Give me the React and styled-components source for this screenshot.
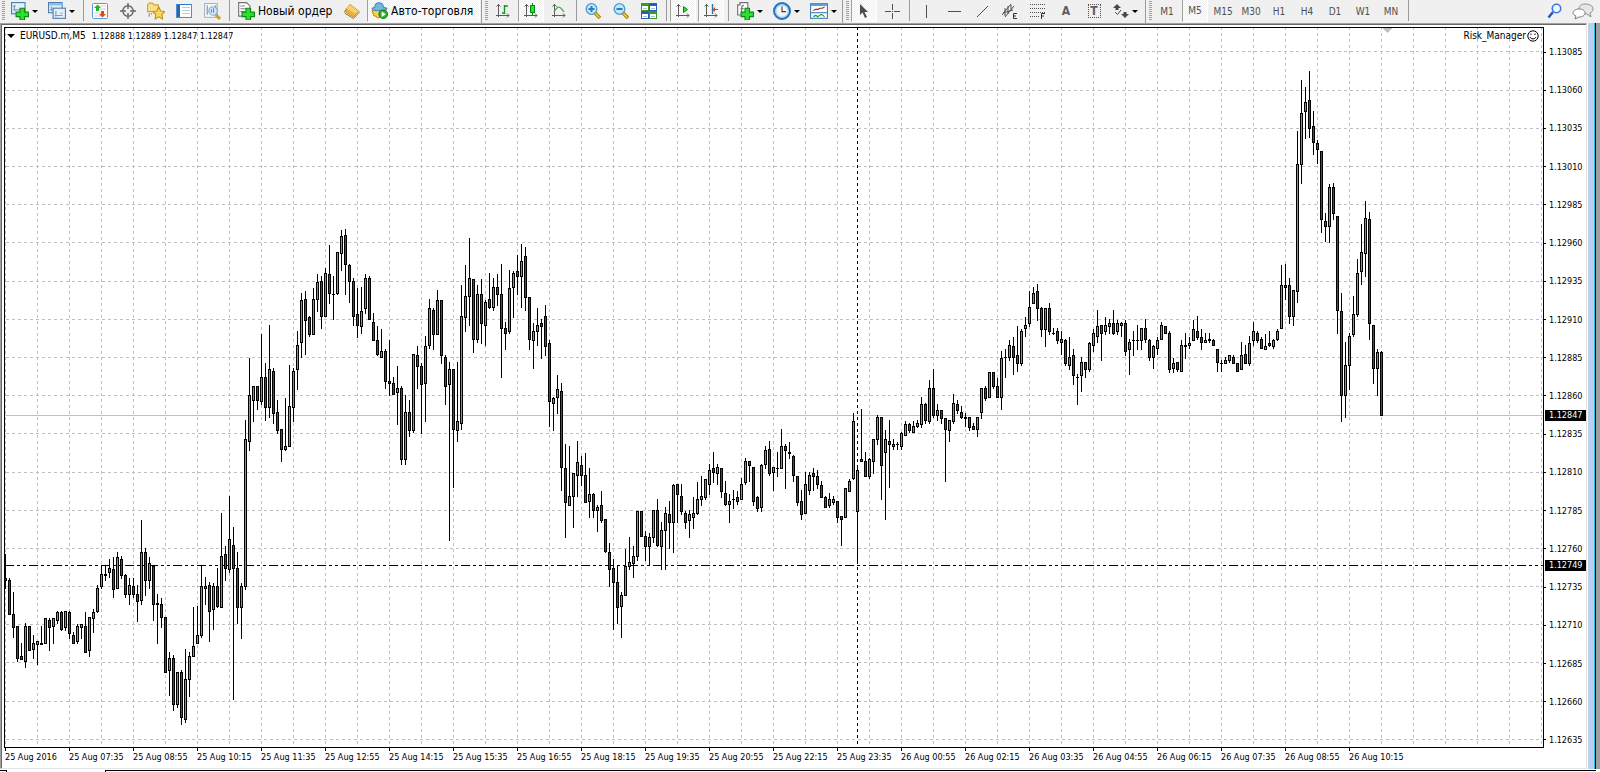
import React from 'react';
import styled, { createGlobalStyle, css } from 'styled-components';

const GlobalStyle = createGlobalStyle`
  * { box-sizing: border-box; }
  html, body { margin: 0; background: #ffffff; }
  body { overflow: hidden; font-family: 'DejaVu Sans Condensed', 'DejaVu Sans', sans-serif; }
  button { font: inherit; color: inherit; }
`;

/* ---------- chart data ---------- */

// high, open, close, low as chart rows, one candle every 4 columns
const CANDLES = `
554,578,581,589 578,580,615,615 592,614,628,638 626,626,659,662 643,656,660,660 623,662,626,668
626,626,651,651 635,650,643,659 641,645,641,665 626,645,643,645 618,644,618,644 618,620,628,651
618,627,618,644 611,621,612,624 611,612,630,631 611,628,611,631 611,612,634,639 632,635,644,644
624,642,626,644 624,628,624,639 612,626,653,653 617,651,617,657 609,619,612,633 585,612,588,613
565,587,574,589 565,576,574,581 559,573,568,578 557,569,590,598 552,589,557,589 556,559,576,579
574,575,595,598 578,595,585,605 578,586,595,598 585,594,602,622 520,601,552,605 548,552,581,596
557,581,563,589 565,566,605,621 594,605,603,644 598,604,618,628 617,617,673,673 652,671,658,696
655,658,705,711 672,705,672,708 670,672,718,725 649,720,679,723 652,680,656,697 607,657,646,657
606,644,635,644 565,636,586,638 577,589,586,605 582,585,612,642 583,610,586,630 568,586,607,608
513,608,556,608 546,554,569,581 496,570,539,573 527,545,569,700 552,568,608,624 583,608,586,639
420,587,439,590 358,442,395,451 386,401,386,422 386,386,401,410 334,402,377,405 363,377,408,421
325,408,369,418 368,371,414,424 400,412,431,434 429,429,450,462 398,450,446,451 365,447,406,447
368,408,371,422 331,370,345,390 293,343,300,358 291,299,321,355 316,317,335,337 288,335,299,335
274,300,282,312 276,281,317,329 268,317,273,317 245,274,294,304 276,295,294,320 252,294,252,295
230,254,236,271 229,235,265,295 264,265,282,303 278,281,317,326 288,314,326,338 287,327,311,334
274,309,278,314 276,278,320,320 313,322,341,341 326,340,355,356 329,358,351,358 349,351,382,389
340,381,384,396 377,383,395,395 366,393,388,425 386,388,460,465 395,460,412,465 400,412,431,437
354,431,354,433 346,355,367,389 363,366,385,434 336,384,346,422 299,346,308,349 308,310,335,350
290,335,300,335 300,300,356,364 355,357,387,405 362,385,369,541 369,369,430,488 362,431,421,442
285,424,316,430 265,318,296,332 238,297,278,326 279,279,340,353 285,340,294,343 279,294,324,344
300,326,302,346 273,299,308,309 278,308,287,311 274,287,295,306 264,294,329,378 322,328,334,350
270,332,288,334 271,288,273,318 255,271,277,295 244,277,261,308 247,256,298,311 297,297,340,350
323,341,331,369 308,332,325,346 319,323,327,359 305,316,347,356 340,343,402,427 397,404,398,431
375,398,389,414 383,391,468,491 444,468,503,538 446,506,496,506 473,497,473,528 441,476,462,497
456,465,476,486 453,475,503,503 468,502,494,518 493,494,511,518 505,511,507,532 491,505,521,523
519,519,552,553 543,552,570,587 559,568,583,630 565,582,608,624 592,607,595,638 549,596,566,596
537,567,562,570 546,564,556,578 511,557,511,561 511,511,537,537 531,536,547,561 533,547,537,566
510,538,510,543 499,510,546,547 522,547,530,570 507,531,513,570 501,514,523,549 484,523,485,553
484,484,495,523 484,496,512,515 511,513,523,529 510,521,514,538 497,518,513,529 482,514,499,515
476,500,496,506 479,498,479,500 464,485,470,495 452,468,473,483 464,474,467,485 468,468,492,498
481,493,505,506 494,505,501,523 490,500,499,509 491,497,502,505 478,500,484,500 458,483,461,485
461,461,466,482 467,467,502,506 496,497,509,512 464,508,465,512 446,465,450,469 441,449,474,476
467,473,467,491 452,469,468,477 429,469,446,469 444,446,451,489 442,454,452,459 455,456,476,482
476,476,503,506 490,501,515,520 472,514,484,514 472,491,475,495 468,473,477,491 470,476,485,489
481,485,498,498 496,497,508,508 493,506,499,508 496,503,499,505 501,501,518,523 516,516,520,546
488,518,488,518 479,492,481,492 413,479,421,480 466,512,470,564 409,459,462,462 452,461,477,477
458,477,459,479 439,462,439,474 415,440,417,445 417,417,466,500 430,453,439,520 420,441,445,488
439,447,444,450 442,445,444,450 432,447,433,450 421,436,424,436 423,424,431,433 421,433,426,433
420,427,423,428 397,425,404,428 403,404,421,424 380,422,388,424 369,388,416,418 404,416,410,421
410,410,419,424 418,418,430,482 420,431,420,442 394,422,403,424 400,404,411,414 406,412,418,419
413,419,417,427 417,417,428,431 423,426,430,430 417,430,417,437 388,413,388,419 386,388,399,401
372,398,372,398 372,372,387,389 378,386,398,398 351,398,358,410 349,358,357,378 340,358,345,361
337,346,358,375 326,355,364,372 329,364,331,366 317,329,325,337 291,324,307,327 287,304,293,304
284,291,309,321 307,308,330,337 308,330,308,347 303,308,332,335 328,334,333,335 328,331,341,344
331,343,339,355 339,340,364,366 337,366,357,370 349,355,376,385 374,378,377,405 357,376,362,392
362,362,370,378 342,370,343,372 329,346,333,352 310,337,326,343 325,325,334,361 317,332,325,335
319,327,323,334 310,323,334,335 320,332,323,335 322,326,323,337 320,323,352,356 339,350,342,375
331,341,340,356 325,341,340,350 328,341,328,350 319,328,340,343 339,340,358,361 345,358,346,369
337,349,340,355 322,340,325,340 326,326,334,334 331,333,370,373 358,369,363,373 362,362,370,372
340,372,345,372 333,347,345,359 337,346,343,349 320,341,329,341 316,331,338,340 329,337,343,350
333,343,340,343 333,341,339,343 339,340,346,346 349,349,363,372 360,364,363,372 357,364,360,364
355,361,355,363 355,357,364,364 363,363,372,372 342,370,355,370 345,354,364,364 336,364,343,366
322,341,331,346 331,333,341,343 337,339,349,349 334,350,346,350 331,343,346,347 339,347,340,349
329,340,331,341 265,329,285,329 264,285,288,300 278,285,317,324 290,317,290,326 131,292,164,303
80,165,113,184 87,112,102,139 71,100,129,138 111,126,143,155 140,143,150,164 151,151,220,233
213,221,227,242 184,227,187,243 183,187,214,220 216,216,311,334 293,311,396,422 342,396,365,418
333,366,336,390 296,335,314,337 259,315,273,317 224,272,252,285 201,254,218,277 212,219,324,340
325,325,369,384 349,369,352,396 351,352,416,416
`.trim().split(/\s+/).map((row) => row.split(',').map(Number));

const GRID_ROWS = [51, 90, 128, 166, 204, 242, 281, 319, 357, 395, 433, 472, 510, 548, 586, 624, 662, 701, 739];
const GRID_COLS = Array.from({ length: 70 }, (_, i) => 5 + i * 32);

const PRICES = GRID_ROWS.map((_, i) => ((113085 - i * 25) / 100000).toFixed(5));

const TIMES = [
  '25 Aug 2016', '25 Aug 07:35', '25 Aug 08:55', '25 Aug 10:15', '25 Aug 11:35', '25 Aug 12:55',
  '25 Aug 14:15', '25 Aug 15:35', '25 Aug 16:55', '25 Aug 18:15', '25 Aug 19:35', '25 Aug 20:55',
  '25 Aug 22:15', '25 Aug 23:35', '26 Aug 00:55', '26 Aug 02:15', '26 Aug 03:35', '26 Aug 04:55',
  '26 Aug 06:15', '26 Aug 07:35', '26 Aug 08:55', '26 Aug 10:15',
];

const PERIODS = ['M1', 'M5', 'M15', 'M30', 'H1', 'H4', 'D1', 'W1', 'MN'];

/* ---------- toolbar parts ---------- */

const Toolbar = styled.header`
  display: flex;
  height: 23px;
  padding-right: 3px;
  background: #f0f0f0;
  white-space: nowrap;
  overflow: hidden;
`;

const Handle = styled.span`
  flex: none;
  width: ${(p) => (p.$first ? 6 : 8)}px;
  padding: 1px 0 2px ${(p) => (p.$first ? 2 : 3)}px;
  border-left: ${(p) => (p.$first ? 0 : 1)}px solid #9a9a9a;
  &::before {
    content: '';
    display: block;
    width: 3px;
    height: 19px;
    background: repeating-linear-gradient(#a0a0a0 0 1px, #f0f0f0 1px 2px);
  }
`;

const Divider = styled.span`
  flex: none;
  width: 6px;
  height: 21px;
  border-right: 2px solid #f0f0f0;
  border-left: 3px solid #f0f0f0;
  background: #9a9a9a;
`;

const ToolButton = styled.button`
  flex: none;
  display: flex;
  align-items: center;
  justify-content: center;
  width: 28px;
  height: 22px;
  padding: 0;
  border: 0;
  background: none;
  ${(p) => p.$drop && css`
    width: 37px;
    padding-left: 5px;
    gap: 3px;
    justify-content: flex-start;
    &::after {
      content: '';
      border: 3px solid transparent;
      border-top-color: #000000;
      border-bottom: 0;
    }
  `}
  ${(p) => p.$pressed && css`
    width: 26px;
    margin: 0 1px;
    border-left: 1px solid #a0a0a0;
    border-right: 1px solid #ffffff;
    border-bottom: 1px solid #ffffff;
    background: repeating-conic-gradient(#f0f0f0 0 25%, #ffffff 0 50%) 0 0 / 2px 2px;
  `}
`;

const TextButton = styled(ToolButton)`
  justify-content: flex-start;
  gap: 3px;
  font-size: 12px;
  width: ${(p) => p.$width}px;
  padding-left: ${(p) => (p.$pressed ? 3 : 5)}px;
`;

const PeriodButton = styled(ToolButton)`
  font-size: 10px;
  color: #505050;
`;

const Spacer = styled.span`
  flex: 1;
`;

const Icon = ({ children, size = 16, ...rest }) => (
  <svg width={size} height={size} viewBox="0 0 16 16" fill="none" aria-hidden="true" {...rest}>
    {children}
  </svg>
);

const plus = <path d="M8 5.500h4v3.500h3.500v4H12v3H8v-3H4.500V9H8z" fill="#2ee02e" stroke="#0a8a14" />;
const axes = <path d="M3.500 1v13M1 12.500h13M1.500 3.500l2-2 2 2M12 10.500l2 2-2 2" stroke="#5c5c5c" />;
const lens = (
  <>
    <path d="M10 10l5 5" stroke="#a87808" strokeWidth="3.500" />
    <path d="M10 10l4.500 4.500" stroke="#f4d050" strokeWidth="1.500" />
    <circle cx="6.500" cy="6" r="5.300" fill="#c4e8fb" stroke="#4b9ad0" strokeWidth="1.300" />
  </>
);

const NewChartIcon = () => (
  <Icon size={18}>
    <rect x=".5" y=".5" width="12" height="10" fill="#e4f1fb" stroke="#4b80b0" />
    <path d="M3 3v5M2 7h8M3 3l-1 1M3 3l1 1" stroke="#7a9db8" />
    {plus}
  </Icon>
);
const ProfilesIcon = () => (
  <Icon size={18}>
    <rect x=".5" y=".5" width="12" height="9" fill="#e4f1fb" stroke="#4b80b0" />
    <path d="M1 2h11" stroke="#8db8de" strokeWidth="2" />
    <path d="M3 4v4M2 7h3" stroke="#7a9db8" />
    <rect x="4.500" y="5.500" width="11" height="9" fill="#e4f1fb" stroke="#4b80b0" />
    <path d="M7 8v5M6 12h7M11 10h2" stroke="#7a9db8" />
  </Icon>
);
const MarketIcon = () => (
  <Icon>
    <rect x=".5" y=".5" width="15" height="15" rx="1" fill="#fff" stroke="#5b9bd5" />
    <path d="M7 3h7M7 6h7M2 10h7M2 13h7" stroke="#d0d0d0" />
    <path d="M5.500 1.500L9 5H7v3H4V5H2z" fill="#22b422" />
    <path d="M10.500 14.500L7 11h2V8h3v3h2z" fill="#e04818" />
  </Icon>
);
const TargetIcon = () => (
  <Icon>
    <circle cx="8" cy="8" r="5.200" stroke="#6a6a6a" strokeWidth="1.500" />
    <path d="M8 0v6M8 10v6M0 8h6M10 8h6" stroke="#6a6a6a" strokeWidth="1.500" />
  </Icon>
);
const NavigatorIcon = () => (
  <Icon size={18}>
    <path d="M.5 2.500L2 1h3l1 1.500h4v6H.5z" fill="#f7e08a" stroke="#cfa53a" />
    <path d="M2 10v3M4 10v1" stroke="#888" />
    <path d="M10.500 4.500l1.700 3.500 3.600.5-2.600 2.600.6 3.900-3.300-1.800L7.200 15l.6-3.900-2.600-2.600 3.600-.5z" fill="#fbd75b" stroke="#c58f1c" />
  </Icon>
);
const TerminalIcon = () => (
  <Icon>
    <rect x=".5" y="1.500" width="15" height="13" fill="#fff" stroke="#4b8fd0" />
    <path d="M1 1.500h14" stroke="#2f77c0" />
    <path d="M2.500 2v12" stroke="#2868b0" strokeWidth="3" />
    <path d="M6 4.500h8M6 7.500h8M6 10.500h8" stroke="#b4cce4" />
  </Icon>
);
const TesterIcon = () => (
  <Icon size={17}>
    <rect x=".5" y=".5" width="12" height="13" fill="#f8f8f8" stroke="#a8b4c0" />
    <path d="M3 2v9M11 2v5" stroke="#7090b0" />
    <path d="M11 11l4 4" stroke="#d2a02c" strokeWidth="3" />
    <circle cx="8.500" cy="7.500" r="4" fill="#cce6f8" stroke="#7fa9cc" />
    <path d="M7 9V6M9 9V5" stroke="#5a86b4" />
  </Icon>
);
const OrderIcon = () => (
  <Icon size={18}>
    <path d="M1.500.5h7l3 3v9h-10z" fill="#fff" stroke="#707070" />
    <path d="M3 3.500h4M3 6h6M3 8.500h4" stroke="#808080" />
    {plus}
  </Icon>
);
const BookIcon = () => (
  <Icon>
    <path d="M.5 8.500L6 1.500l9 7-5.500 6z" fill="#e8b040" stroke="#a8701c" />
    <path d="M1 9.500l8.500 5.500 5.500-6" stroke="#fff3c0" />
    <path d="M6 1.500l9 7-4 2-8.500-5z" fill="#f6d070" />
    <path d="M.5 10l9 5.500 6-6.500" stroke="#a8701c" />
  </Icon>
);
const RobotIcon = () => (
  <Icon size={17}>
    <path d="M1 8l1.500 4.500L7 15l4-1 2-6z" fill="#f6cd4c" stroke="#c9962a" />
    <path d="M4 2.500C5 0 10 0 11 2.500L12 5l3 1c-1 3-13 3-14 0l2.500-1z" fill="#74b8e2" stroke="#3c88b8" />
    <circle cx="11.500" cy="11.500" r="4" fill="#26b32a" stroke="#128018" />
    <path d="M10 9l4 2.500-4 2.500z" fill="#fff" />
  </Icon>
);
const BarsIcon = () => (
  <Icon>
    {axes}
    <path d="M9.500 2v9M9 3h4M7 10h3" stroke="#0c9a14" strokeWidth="1.400" />
  </Icon>
);
const CandleIcon = () => (
  <Icon>
    {axes}
    <path d="M9.500 0v12" stroke="#0a8a14" />
    <rect x="7.500" y="2.500" width="4" height="7" fill="#2ee02e" stroke="#0a8a14" />
  </Icon>
);
const LineIcon = () => (
  <Icon>
    {axes}
    <path d="M3 9c4-7 6-6 10 0" stroke="#4aa64e" strokeWidth="1.300" />
  </Icon>
);
const ZoomInIcon = () => <Icon>{lens}<path d="M3.500 6h6M6.500 3v6" stroke="#2f7cc0" strokeWidth="2" /></Icon>;
const ZoomOutIcon = () => <Icon>{lens}<path d="M3.500 6h6" stroke="#2f7cc0" strokeWidth="2" /></Icon>;
const TileIcon = () => (
  <Icon>
    <path d="M0 0h8v8H0zM8 8h8v8H8z" fill="#3c9a20" />
    <path d="M8 0h8v8H8zM0 8h8v8H0z" fill="#2a5cc0" />
    <path d="M1 3h6v4H1zM9 3h6v4H9zM1 11h6v4H1zM9 11h6v4H9z" fill="#fff" />
    <path d="M2 5.500h4M10 5.500h4M2 13.500h4M10 13.500h4" stroke="#a8c0d8" />
  </Icon>
);
const AutoScrollIcon = () => (
  <Icon>
    {axes}
    <path d="M8.500 3.500v6l4-3z" fill="#2ee02e" stroke="#0a8a14" />
  </Icon>
);
const ShiftIcon = () => (
  <Icon>
    {axes}
    <path d="M9.500 1v10" stroke="#2a6fb0" strokeWidth="1.400" />
    <path d="M15 6h-3V4L9.500 6.500 12 9V7h3z" fill="#d04010" />
  </Icon>
);
const IndicatorIcon = () => (
  <Icon size={18}>
    <path d="M1.500 2.500h2v-2h7v11h-9z" fill="#fff" stroke="#707070" />
    <path d="M7 3c-2 0-2 1-2 2v5M4 6h3" stroke="#707070" />
    {plus}
  </Icon>
);
const ClockIcon = () => (
  <Icon size={18}>
    <circle cx="8" cy="8" r="7" fill="#eef4f8" stroke="#2474c4" strokeWidth="2" />
    <circle cx="8" cy="8" r="5.500" stroke="#a8cdec" />
    <path d="M8 4v4.500h3.500" stroke="#404040" />
  </Icon>
);
const TemplateIcon = () => (
  <Icon size={18}>
    <rect x=".5" y="1.500" width="15" height="13" fill="#fff" stroke="#3d7fc0" />
    <path d="M1 2.500h14" stroke="#5b9bdb" strokeWidth="2" />
    <path d="M1 9.500h14" stroke="#3d7fc0" />
    <path d="M3 7.500l2-1h2l2-1h2l2-1" stroke="#a02c1c" />
    <path d="M3 13l2-1 2 1 3-2 3 2" stroke="#1d8c2c" />
  </Icon>
);
const CursorIcon = () => (
  <Icon>
    <path d="M4 1v11l2.500-2.500L9 15l2-1-2.500-5H12z" fill="#4c4c4c" />
  </Icon>
);
const CrossIcon = () => (
  <Icon>
    <path d="M8.500 1v6M8.500 10v6M1 8.500h6M10 8.500h6M8 8.500h1" stroke="#505050" />
  </Icon>
);
const VLineIcon = () => <Icon><path d="M8.500 2v13" stroke="#505050" /></Icon>;
const HLineIcon = () => <Icon><path d="M2 8.500h13" stroke="#505050" /></Icon>;
const TrendIcon = () => <Icon><path d="M3 14L14 3" stroke="#505050" /></Icon>;
const ChannelIcon = () => (
  <Icon>
    <path d="M0 12L9 1M3 14L12 3M3 5v8M6 3v8M9 2v6M1 10l10-3" stroke="#505050" />
    <path d="M15 10.500h-3.500v5H15M11.500 13H14" stroke="#303030" />
  </Icon>
);
const FiboIcon = () => (
  <Icon>
    <path d="M0 1.500h16M0 5.500h16M0 9.500h16M0 13.500h9" stroke="#505050" strokeDasharray="1 1" />
    <path d="M15 10.500h-3.500V16M11.500 13H14" stroke="#303030" />
  </Icon>
);
const ArrowsIcon = () => (
  <Icon>
    <path d="M4 1l4 4H5.500v2h-3V5H0zM12 15l-4-4h2.500V9h3v2H16z" fill="#484848" />
    <path d="M2 9l2.500 2.500L8 7" stroke="#484848" />
  </Icon>
);
const SearchIcon = () => (
  <Icon>
    <path d="M6 9l-4.500 5.500" stroke="#2358b8" strokeWidth="2.500" />
    <circle cx="9.500" cy="5.500" r="4.200" fill="#f6faff" stroke="#3a78dc" strokeWidth="1.600" />
  </Icon>
);
const ChatIcon = () => (
  <svg width="22" height="17" viewBox="0 0 22 17" aria-hidden="true">
    <path d="M13 1c5 0 8 2 8 5 0 2-1 3-3 4l1 4-4-3c-4 0-8-2-8-5s2-5 6-5z" fill="#e6e6e6" stroke="#909090" />
    <path d="M7 6c4 0 6 2 6 4s-2 4-6 4l-4 2 1-3c-2-1-3-2-3-3 0-2 2-4 6-4z" fill="#fff" stroke="#7c7c7c" />
  </svg>
);

const Letter = styled.span`
  font-size: 12px;
  font-weight: 700;
  line-height: 12px;
  color: #606060;
  ${(p) => p.$boxed && css`
    width: 13px;
    height: 14px;
    border: 1px dotted #505050;
    text-align: center;
  `}
`;

const Tool = ({ label, icon: Glyph, ...rest }) => (
  <ToolButton type="button" aria-label={label} {...rest}>
    <Glyph />
  </ToolButton>
);

/* ---------- chart window ---------- */

const Desktop = styled.div`
  display: flex;
`;

const ChartWindow = styled.main`
  flex: 1;
  min-width: 0;
  margin-right: 1px;
  border: 1px solid #e3e3e3;
  border-top-color: #a0a0a0;
  border-left-color: #a0a0a0;
`;

const ChartFrame = styled.div`
  display: grid;
  grid-template-columns: minmax(0, 1fr) 42px;
  border-top: 1px solid #696969;
  border-left: 1px solid #696969;
  padding: 2px 0 0 2px;
`;

const Plot = styled.section`
  position: relative;
  height: 721px;
  border: 1px solid #000000;
`;

const PlotSvg = styled.svg`
  display: block;
  width: 100%;
  height: 719px;
  shape-rendering: crispEdges;
`;

const PlotHeader = styled.div`
  position: absolute;
  top: 1px;
  left: 2px;
  right: 4px;
  display: flex;
  align-items: center;
  font-size: 10px;
  line-height: 14px;
  white-space: pre;
`;

const SymbolCaret = styled.span`
  margin-right: 5px;
  border: 4px solid transparent;
  border-top-color: #000000;
  border-bottom: 0;
`;

const Quotes = styled.span`
  margin-left: 6px;
  font-size: 9px;
`;

const Expert = styled.span`
  display: flex;
  align-items: center;
  gap: 1px;
  margin-left: auto;
`;

const PriceAxis = styled.div`
  position: relative;
  display: flex;
  flex-direction: column;
  justify-content: space-between;
  height: 719px;
  padding-top: 19px;
  font-size: 9px;
`;

const Price = styled.span`
  display: flex;
  align-items: center;
  height: 12px;
  line-height: 12px;
  &::before {
    content: '';
    width: 2px;
    height: 1px;
    margin-right: 3px;
    background: #000000;
  }
`;

const PriceTag = styled.span`
  position: absolute;
  left: 1px;
  top: ${(p) => p.$row - 32}px;
  width: 41px;
  height: 11px;
  padding-left: 4px;
  line-height: 11px;
  background: #000000;
  color: #ffffff;
`;

const TimeAxis = styled.div`
  grid-column: 1 / -1;
  display: flex;
  height: 20px;
  padding-left: 1px;
  overflow: hidden;
  font-size: 9px;
`;

const Time = styled.span`
  flex: none;
  width: 64px;
  line-height: 12px;
  white-space: nowrap;
  &::before {
    content: '';
    display: block;
    width: 1px;
    height: 3px;
    background: #000000;
  }
`;

const WindowEdge = styled.div`
  flex: none;
  width: 12px;
  border-right: 4px solid #a0a0a0;
  background: linear-gradient(90deg, #b9d1ea 0 6px, #29c4ee 6px 7px, #000000 7px 8px);
`;

const PanelTop = styled.footer`
  display: flex;
  justify-content: space-between;
  height: 4px;
  padding: 1px 4px 0 0;
`;

const PanelCorner = styled.span`
  width: 7px;
  border: solid #000000;
  border-width: 1px 1px 0 0;
`;

const PanelLine = styled.span`
  flex: 1;
  margin-left: 98px;
  border: solid #000000;
  border-width: 1px 0 0 1px;
`;

const Candle = ({ x, data: [high, open, close, low] }) => {
  const top = Math.min(open, close);
  const height = Math.abs(open - close);
  return (
    <g>
      <rect x={x} y={high} width="1" height={low - high} />
      <rect x={x - 1} y={top} width="3" height={height} />
      {height > 2 && (
        <rect x={x} y={top + 1} width="1" height={height - 2} fill={close < open ? '#32cd32' : '#ff0000'} />
      )}
    </g>
  );
};

const CandleChart = () => (
  <PlotSvg role="img" aria-label="EURUSD.m M5">
    <g transform="translate(-5 -28)">
      <g fill="none" stroke="#c0c0c0">
        {GRID_COLS.map((x) => <path key={x} d={`M${x + 0.5} 27V748`} strokeDasharray="3 3" />)}
        {GRID_ROWS.map((y) => <path key={y} d={`M6 ${y + 0.5}H4000`} strokeDasharray="3 3" />)}
        <path d="M5 415.500H4000" />
      </g>
      <path d="M1382 28h10l-5 5z" fill="#c0c0c0" />
      <path d="M857.500 27V748" stroke="#000" strokeDasharray="3 3" />
      <path d="M5 565.500H4000" stroke="#000" strokeDasharray="9 3 3 3 3 3" />
      {CANDLES.map((row, i) => <Candle key={i} x={5 + i * 4} data={row} />)}
    </g>
  </PlotSvg>
);

const App = () => (
  <>
    <GlobalStyle />
    <Toolbar>
      <Handle $first />
      <Tool label="New chart" icon={NewChartIcon} $drop />
      <Tool label="Profiles" icon={ProfilesIcon} $drop />
      <Divider />
      <Tool label="Market watch" icon={MarketIcon} />
      <Tool label="Data window" icon={TargetIcon} />
      <Tool label="Navigator" icon={NavigatorIcon} />
      <Tool label="Terminal" icon={TerminalIcon} />
      <Tool label="Strategy tester" icon={TesterIcon} />
      <Divider />
      <TextButton type="button" $width={106}><OrderIcon />Новый ордер</TextButton>
      <Tool label="MetaEditor" icon={BookIcon} />
      <TextButton type="button" $width={113} $pressed><RobotIcon />Авто-торговля</TextButton>

      <Handle />
      <Tool label="Bar chart" icon={BarsIcon} />
      <Tool label="Candlesticks" icon={CandleIcon} $pressed />
      <Tool label="Line chart" icon={LineIcon} />
      <Divider />
      <Tool label="Zoom in" icon={ZoomInIcon} />
      <Tool label="Zoom out" icon={ZoomOutIcon} />
      <Tool label="Tile windows" icon={TileIcon} />
      <Divider />
      <Tool label="Auto scroll" icon={AutoScrollIcon} $pressed />
      <Tool label="Chart shift" icon={ShiftIcon} $pressed />
      <Divider />
      <Tool label="Indicators" icon={IndicatorIcon} $drop />
      <Tool label="Periods" icon={ClockIcon} $drop />
      <Tool label="Templates" icon={TemplateIcon} $drop />

      <Handle />
      <Tool label="Cursor" icon={CursorIcon} $pressed />
      <Tool label="Crosshair" icon={CrossIcon} />
      <Divider />
      <Tool label="Vertical line" icon={VLineIcon} />
      <Tool label="Horizontal line" icon={HLineIcon} />
      <Tool label="Trendline" icon={TrendIcon} />
      <Tool label="Equidistant channel" icon={ChannelIcon} />
      <Tool label="Fibonacci" icon={FiboIcon} />
      <ToolButton type="button"><Letter>A</Letter></ToolButton>
      <ToolButton type="button"><Letter $boxed>T</Letter></ToolButton>
      <Tool label="Arrows" icon={ArrowsIcon} $drop />

      <Handle />
      {PERIODS.map((name) => (
        <PeriodButton type="button" key={name} $pressed={name === 'M5'}>{name}</PeriodButton>
      ))}
      <Divider />
      <Spacer />
      <Tool label="Search" icon={SearchIcon} />
      <Tool label="Chat" icon={ChatIcon} />
    </Toolbar>

    <Desktop>
      <ChartWindow>
        <ChartFrame>
          <Plot>
            <CandleChart />
            <PlotHeader>
              <SymbolCaret />
              EURUSD.m,M5
              <Quotes>1.12888 1.12889 1.12847 1.12847</Quotes>
              <Expert>
                Risk_Manager
                <svg width="12" height="12" viewBox="0 0 12 12" fill="none" stroke="#000" aria-hidden="true">
                  <circle cx="6" cy="6" r="5.200" />
                  <path d="M3 7c1 2.500 5 2.500 6 0M4 3.500v1.500M8 3.500v1.500" />
                </svg>
              </Expert>
            </PlotHeader>
          </Plot>
          <PriceAxis>
            {PRICES.map((price) => <Price key={price}>{price}</Price>)}
            <PriceTag $row={415}>1.12847</PriceTag>
            <PriceTag $row={565}>1.12749</PriceTag>
          </PriceAxis>
          <TimeAxis>
            {TIMES.map((time) => <Time key={time}>{time}</Time>)}
          </TimeAxis>
        </ChartFrame>
      </ChartWindow>
      <WindowEdge />
    </Desktop>
    <PanelTop>
      <PanelCorner />
      <PanelLine />
    </PanelTop>
  </>
);

export default App;
